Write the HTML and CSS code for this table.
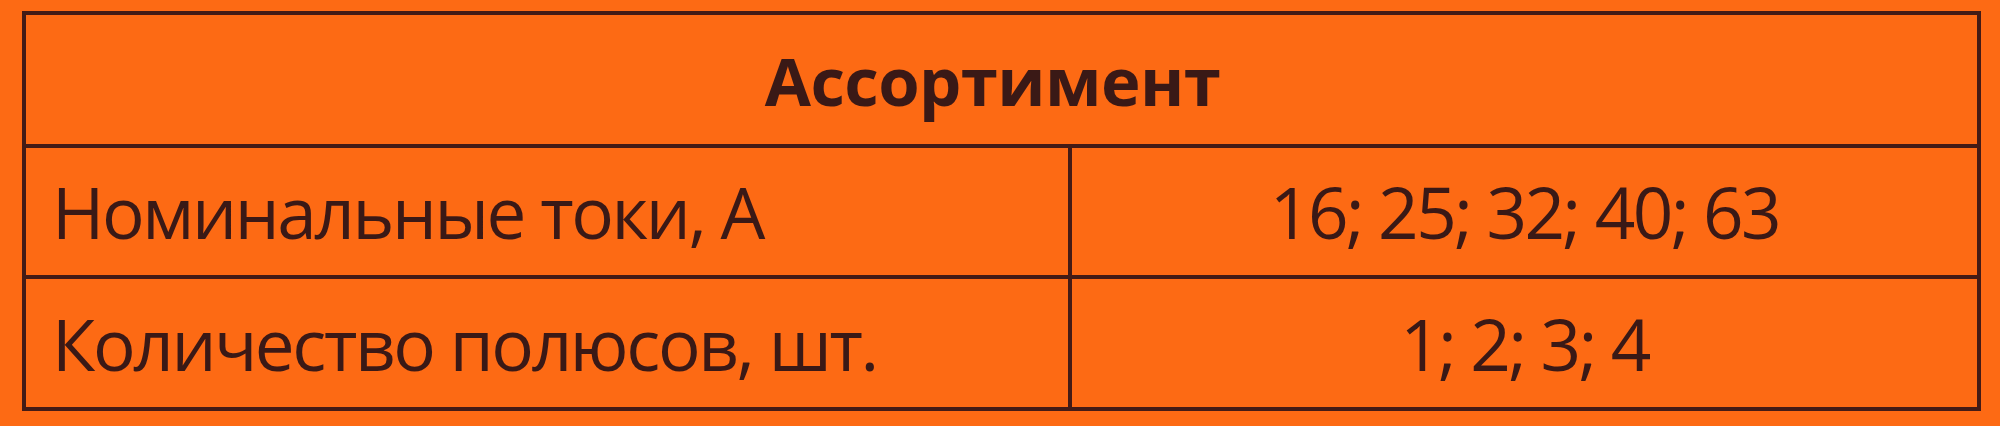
FILE: index.html
```html
<!DOCTYPE html>
<html lang="ru">
<head>
<meta charset="utf-8">
<title>Ассортимент</title>
<link rel="stylesheet" href="styles.css">
</head>
<body>
<div class="table">
  <div class="cell head">Ассортимент</div>
  <div class="cell label">Номинальные токи, А</div>
  <div class="cell value">16; 25; 32; 40; 63</div>
  <div class="cell label">Количество полюсов, шт.</div>
  <div class="cell value">1; 2; 3; 4</div>
</div>
</body>
</html>
```
FILE: styles.css
```css
html, body {
  margin: 0;
  padding: 0;
}
body {
  width: 2000px;
  height: 426px;
  background: #fd6a14;
  font-family: "Open Sans", "Noto Sans", sans-serif;
  color: #3a1916;
  overflow: hidden;
}
.table {
  box-sizing: border-box;
  margin: 11px 0 0 22px;
  width: 1959px;
  border: 4px solid #431b16;
  display: grid;
  grid-template-columns: 1042px 1fr;
  grid-template-rows: 129px 131px 132px;
}
.cell {
  display: flex;
  align-items: center;
  min-width: 0;
  white-space: nowrap;
}
.head {
  grid-column: 1 / 3;
  justify-content: center;
  padding-right: 18px;
  font-weight: 700;
  font-size: 67px;
  letter-spacing: -0.6px;
}
.label,
.value {
  border-top: 4px solid #431b16;
  font-size: 71px;
  font-weight: 500;
}
.label {
  padding-left: 26px;
  letter-spacing: -2.4px;
}
.value {
  border-left: 4px solid #431b16;
  justify-content: center;
  letter-spacing: -2.5px;
}
```
